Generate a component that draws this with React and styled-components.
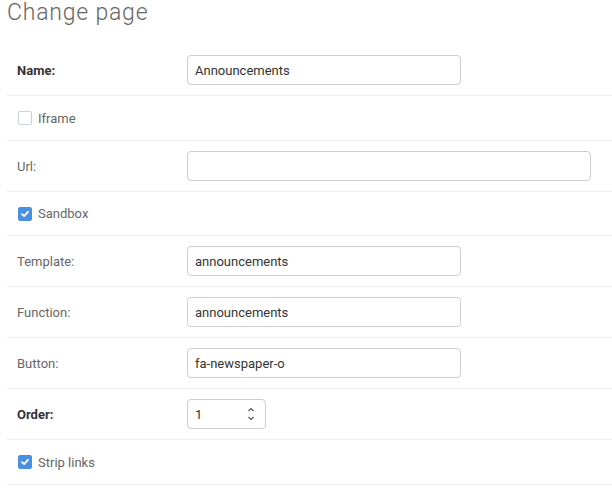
import React from "react";
import styled, { createGlobalStyle } from "styled-components";

const Global = createGlobalStyle`
  html, body { margin: 0; padding: 0; background: #fff; }
  body { font-family: Roboto, "Noto Sans", Arial, sans-serif; font-size: 13px; color: #666; }
  * { box-sizing: border-box; }
`;

const Page = styled.div`
  padding: 0 0 0 7px;
  width: 612px;
  overflow: hidden;
`;

const Title = styled.h1`
  margin: 0;
  padding: 0;
  height: 45px;
  font-size: 23px;
  line-height: 26px;
  font-weight: 300;
  letter-spacing: 0.8px;
  color: #666;
`;

const Fieldset = styled.div`
  display: flex;
  flex-direction: column;
  width: 620px;
`;

const Row = styled.div`
  display: flex;
  align-items: center;
  padding: 10px;
  border-bottom: 1px solid #eee;
  min-height: ${(p) => p.$h || 51}px;
`;

const Label = styled.label`
  width: 170px;
  padding-right: 10px;
  flex: none;
  font-size: 13px;
  color: ${(p) => (p.$required ? "#333" : "#666")};
  font-weight: ${(p) => (p.$required ? 700 : 400)};
`;

const TextInput = styled.div`
  width: ${(p) => p.$w}px;
  height: 30px;
  border: 1px solid #ccc;
  border-radius: 4px;
  padding: 0 7px;
  display: flex;
  align-items: center;
  font-size: 13px;
  color: #333;
  background: #fff;
`;

const NumberInput = styled(TextInput)`
  justify-content: space-between;
  padding-right: 10px;
`;

const Spinner = styled.svg`
  display: block;
`;

const CheckLabel = styled.label`
  display: flex;
  align-items: center;
  gap: 6px;
  font-size: 13px;
  color: #666;
  padding-left: 1px;
`;

const Box = styled.span`
  width: 14px;
  height: 14px;
  border-radius: 2px;
  flex: none;
  display: flex;
  align-items: center;
  justify-content: center;
  background: ${(p) => (p.$on ? "#4a90e2" : "#fff")};
  border: 1px solid ${(p) => (p.$on ? "#4a90e2" : "#c9cfdc")};
`;

function Check({ on, children }) {
  return (
    <CheckLabel>
      <Box $on={on}>
        {on && (
          <svg width="10" height="10" viewBox="0 0 10 10">
            <path d="M2 5.2 L4.1 7.2 L8 2.8" fill="none" stroke="#fff" strokeWidth="1.8" strokeLinecap="round" strokeLinejoin="round" />
          </svg>
        )}
      </Box>
      {children}
    </CheckLabel>
  );
}

export default function App() {
  return (
    <>
      <Global />
      <Page>
        <Title>Change page</Title>
        <Fieldset>
          <Row>
            <Label $required>Name:</Label>
            <TextInput $w={274}>Announcements</TextInput>
          </Row>
          <Row $h={45}>
            <Check on={false}>Iframe</Check>
          </Row>
          <Row>
            <Label>Url:</Label>
            <TextInput $w={404} />
          </Row>
          <Row $h={44}>
            <Check on>Sandbox</Check>
          </Row>
          <Row>
            <Label>Template:</Label>
            <TextInput $w={274}>announcements</TextInput>
          </Row>
          <Row>
            <Label>Function:</Label>
            <TextInput $w={274}>announcements</TextInput>
          </Row>
          <Row>
            <Label>Button:</Label>
            <TextInput $w={274}>fa-newspaper-o</TextInput>
          </Row>
          <Row>
            <Label $required>Order:</Label>
            <NumberInput $w={79}>
              1
              <Spinner width="8" height="16" viewBox="0 0 8 16">
                <path d="M1.5 5 L4 2.5 L6.5 5" fill="none" stroke="#555" strokeWidth="1.2" />
                <path d="M1.5 11 L4 13.5 L6.5 11" fill="none" stroke="#555" strokeWidth="1.2" />
              </Spinner>
            </NumberInput>
          </Row>
          <Row $h={45}>
            <Check on>Strip links</Check>
          </Row>
        </Fieldset>
      </Page>
    </>
  );
}
